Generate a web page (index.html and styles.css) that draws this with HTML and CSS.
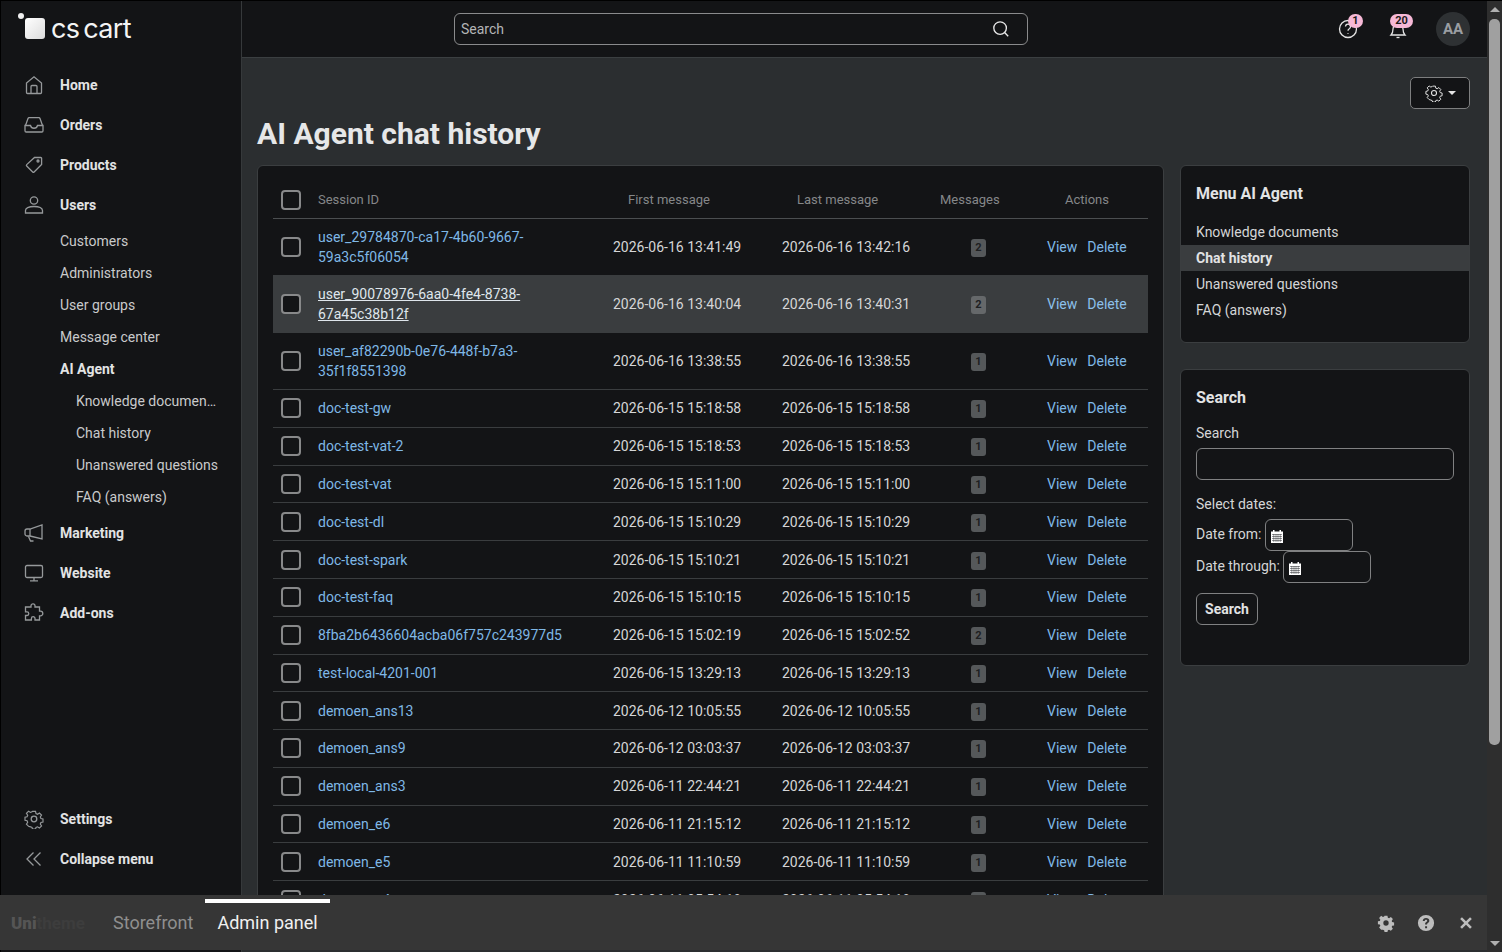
FILE: index.html
```html
<!DOCTYPE html>
<html lang="en">
<head>
  <meta charset="UTF-8">
  <title>AI Agent chat history</title>
  <link rel="stylesheet" href="styles.css">
</head>
<body>

<div class="app">

  <aside class="sidebar">
    <div class="logo">
      <span class="logo-mark"><i class="logo-dot"></i><i class="logo-box"></i></span>
      <span class="logo-text">cs cart</span>
    </div>

    <nav class="nav">
      <a class="nav-item"><svg class="nav-icon" viewBox="0 0 20 20"><path d="M2.500 17.500V8L10 1.800 17.500 8v9.500a1 1 0 0 1-1 1h-13a1 1 0 0 1-1-1z"/><path d="M7 18.500v-7a1 1 0 0 1 1-1h4a1 1 0 0 1 1 1v7"/></svg>Home</a>
      <a class="nav-item"><svg class="nav-icon" viewBox="0 0 20 20"><path d="M1.500 10.500 4 3.500a1.200 1.200 0 0 1 1.100-.8h9.800a1.200 1.200 0 0 1 1.100.8l2.500 7"/><path d="M1 10.500h5.500a3.600 3.600 0 0 0 7 0H19v5.300a1.200 1.200 0 0 1-1.200 1.200H2.200A1.200 1.200 0 0 1 1 15.800z"/></svg>Orders</a>
      <a class="nav-item"><svg class="nav-icon" viewBox="0 0 20 20"><path d="M10.500 2.500h6.300a.8.8 0 0 1 .8.8v6.200l-7.500 7.500a1 1 0 0 1-1.400 0l-6-6a1 1 0 0 1 0-1.400z"/><circle cx="14" cy="6" r="1"/></svg>Products</a>
      <a class="nav-item"><svg class="nav-icon" viewBox="0 0 20 20"><circle cx="10" cy="5.500" r="3.700"/><path d="M1.500 18v-2.500c0-2.200 3-4 8.500-4s8.500 1.800 8.500 4V18z"/></svg>Users</a>
      <a class="nav-sub">Customers</a>
      <a class="nav-sub">Administrators</a>
      <a class="nav-sub">User groups</a>
      <a class="nav-sub">Message center</a>
      <a class="nav-sub nav-sub-active">AI Agent</a>
      <a class="nav-sub nav-sub2">Knowledge documen…</a>
      <a class="nav-sub nav-sub2">Chat history</a>
      <a class="nav-sub nav-sub2">Unanswered questions</a>
      <a class="nav-sub nav-sub2">FAQ (answers)</a>
      <a class="nav-item"><svg class="nav-icon" viewBox="0 0 20 20"><path d="M18 2v14L6 13H3a2 2 0 0 1-2-2V8a2 2 0 0 1 2-2h3z"/><path d="M6 6v7M4.500 13.500 6.500 18h3"/></svg>Marketing</a>
      <a class="nav-item"><svg class="nav-icon" viewBox="0 0 20 20"><rect x="1.500" y="2.500" width="17" height="12" rx="1.500"/><path d="M10 14.500v3M6 17.800h8"/></svg>Website</a>
      <a class="nav-item"><svg class="nav-icon" viewBox="0 0 20 20"><path d="M7 4V2.800a2 2 0 0 1 4 0V4h4.500v4.200h1a2.300 2.300 0 0 1 0 4.600h-1V17H11v-1.500a1.800 1.800 0 0 0-3.600 0V17H1.500v-4.500H3a1.800 1.800 0 0 0 0-3.600H1.500V4z"/></svg>Add-ons</a>
    </nav>

    <nav class="nav nav-bottom">
      <a class="nav-item"><svg class="nav-icon" viewBox="0 0 20 20"><circle cx="10" cy="10" r="2.800"/><path d="M8.300 1.500h3.400l.5 2.500 1.700.7 2.100-1.400 2.400 2.400-1.400 2.100.7 1.700 2.300.5v3.400l-2.300.5-.7 1.700 1.400 2.100-2.400 2.400-2.100-1.400-1.700.7-.5 1.800H8.300l-.5-1.800-1.700-.7L4 18.100l-2.400-2.400L3 13.600l-.7-1.700-2.300-.5V8l2.300-.5.7-1.700L1.600 3.700 4 1.300l2.100 1.400 1.700-.7z" transform="translate(1 1) scale(.9)"/></svg>Settings</a>
      <a class="nav-item"><svg class="nav-icon" viewBox="0 0 20 20"><path d="M9.500 3.500 3 10l6.500 6.500M16.500 3.500 10 10l6.500 6.500"/></svg>Collapse menu</a>
    </nav>
  </aside>

  <div class="main">
    <header class="topbar">
      <div class="top-search">
        <span class="top-search-text">Search</span>
        <svg class="top-search-icon" viewBox="0 0 20 20"><circle cx="9" cy="9" r="7"/><path d="m14 14 4 4"/></svg>
      </div>
      <div class="top-icons">
        <span class="top-icon">
          <svg viewBox="0 0 20 20"><circle cx="10" cy="10" r="8.500"/><path d="M7.500 7.500a2.500 2.500 0 1 1 3.800 2.200c-.9.500-1.300 1-1.300 2"/><path d="M10 14v.8"/></svg>
          <b class="pill pill-one">1</b>
        </span>
        <span class="top-icon">
          <svg viewBox="0 0 20 20"><path d="M3 16c1.500-1.500 2-3 2-6a5 5 0 0 1 10 0c0 3 .5 4.500 2 6z"/><path d="M8.500 18.500h3"/></svg>
          <b class="pill pill-two">20</b>
        </span>
        <span class="avatar">AA</span>
      </div>
    </header>

    <div class="content">
      <div class="toolbar">
        <button class="gear-btn">
          <svg viewBox="0 0 20 20"><circle cx="10" cy="10" r="2.800"/><path d="M8.300 1.500h3.400l.5 2.500 1.700.7 2.100-1.400 2.400 2.400-1.400 2.100.7 1.700 2.300.5v3.400l-2.300.5-.7 1.700 1.400 2.100-2.400 2.400-2.100-1.400-1.700.7-.5 1.800H8.300l-.5-1.800-1.700-.7L4 18.100l-2.400-2.400L3 13.600l-.7-1.700-2.300-.5V8l2.300-.5.7-1.700L1.600 3.700 4 1.300l2.100 1.400 1.700-.7z" transform="translate(1 1) scale(.9)"/></svg>
          <i class="caret"></i>
        </button>
      </div>

      <h1 class="page-title">AI Agent chat history</h1>

      <div class="columns">
        <section class="card table-card">
          <table class="history">
            <colgroup>
              <col class="col-check"><col class="col-id"><col class="col-first"><col class="col-last"><col class="col-count"><col class="col-actions">
            </colgroup>
            <thead>
              <tr>
                <th><i class="check"></i></th>
                <th>Session ID</th>
                <th class="th-first">First message</th>
                <th class="th-last">Last message</th>
                <th class="th-count">Messages</th>
                <th class="th-actions">Actions</th>
              </tr>
            </thead>
            <tbody>
              <tr class="tall"><td><i class="check"></i></td><td><a class="link">user_29784870-ca17-4b60-9667-59a3c5f06054</a></td><td>2026-06-16 13:41:49</td><td>2026-06-16 13:42:16</td><td class="td-count"><span class="count">2</span></td><td><a class="link">View</a><a class="link act">Delete</a></td></tr>
              <tr class="tall hover"><td><i class="check"></i></td><td><a class="link">user_90078976-6aa0-4fe4-8738-67a45c38b12f</a></td><td>2026-06-16 13:40:04</td><td>2026-06-16 13:40:31</td><td class="td-count"><span class="count">2</span></td><td><a class="link">View</a><a class="link act">Delete</a></td></tr>
              <tr class="tall"><td><i class="check"></i></td><td><a class="link">user_af82290b-0e76-448f-b7a3-35f1f8551398</a></td><td>2026-06-16 13:38:55</td><td>2026-06-16 13:38:55</td><td class="td-count"><span class="count">1</span></td><td><a class="link">View</a><a class="link act">Delete</a></td></tr>
              <tr><td><i class="check"></i></td><td><a class="link">doc-test-gw</a></td><td>2026-06-15 15:18:58</td><td>2026-06-15 15:18:58</td><td class="td-count"><span class="count">1</span></td><td><a class="link">View</a><a class="link act">Delete</a></td></tr>
              <tr><td><i class="check"></i></td><td><a class="link">doc-test-vat-2</a></td><td>2026-06-15 15:18:53</td><td>2026-06-15 15:18:53</td><td class="td-count"><span class="count">1</span></td><td><a class="link">View</a><a class="link act">Delete</a></td></tr>
              <tr><td><i class="check"></i></td><td><a class="link">doc-test-vat</a></td><td>2026-06-15 15:11:00</td><td>2026-06-15 15:11:00</td><td class="td-count"><span class="count">1</span></td><td><a class="link">View</a><a class="link act">Delete</a></td></tr>
              <tr><td><i class="check"></i></td><td><a class="link">doc-test-dl</a></td><td>2026-06-15 15:10:29</td><td>2026-06-15 15:10:29</td><td class="td-count"><span class="count">1</span></td><td><a class="link">View</a><a class="link act">Delete</a></td></tr>
              <tr><td><i class="check"></i></td><td><a class="link">doc-test-spark</a></td><td>2026-06-15 15:10:21</td><td>2026-06-15 15:10:21</td><td class="td-count"><span class="count">1</span></td><td><a class="link">View</a><a class="link act">Delete</a></td></tr>
              <tr><td><i class="check"></i></td><td><a class="link">doc-test-faq</a></td><td>2026-06-15 15:10:15</td><td>2026-06-15 15:10:15</td><td class="td-count"><span class="count">1</span></td><td><a class="link">View</a><a class="link act">Delete</a></td></tr>
              <tr><td><i class="check"></i></td><td><a class="link">8fba2b6436604acba06f757c243977d5</a></td><td>2026-06-15 15:02:19</td><td>2026-06-15 15:02:52</td><td class="td-count"><span class="count">2</span></td><td><a class="link">View</a><a class="link act">Delete</a></td></tr>
              <tr><td><i class="check"></i></td><td><a class="link">test-local-4201-001</a></td><td>2026-06-15 13:29:13</td><td>2026-06-15 13:29:13</td><td class="td-count"><span class="count">1</span></td><td><a class="link">View</a><a class="link act">Delete</a></td></tr>
              <tr><td><i class="check"></i></td><td><a class="link">demoen_ans13</a></td><td>2026-06-12 10:05:55</td><td>2026-06-12 10:05:55</td><td class="td-count"><span class="count">1</span></td><td><a class="link">View</a><a class="link act">Delete</a></td></tr>
              <tr><td><i class="check"></i></td><td><a class="link">demoen_ans9</a></td><td>2026-06-12 03:03:37</td><td>2026-06-12 03:03:37</td><td class="td-count"><span class="count">1</span></td><td><a class="link">View</a><a class="link act">Delete</a></td></tr>
              <tr><td><i class="check"></i></td><td><a class="link">demoen_ans3</a></td><td>2026-06-11 22:44:21</td><td>2026-06-11 22:44:21</td><td class="td-count"><span class="count">1</span></td><td><a class="link">View</a><a class="link act">Delete</a></td></tr>
              <tr><td><i class="check"></i></td><td><a class="link">demoen_e6</a></td><td>2026-06-11 21:15:12</td><td>2026-06-11 21:15:12</td><td class="td-count"><span class="count">1</span></td><td><a class="link">View</a><a class="link act">Delete</a></td></tr>
              <tr><td><i class="check"></i></td><td><a class="link">demoen_e5</a></td><td>2026-06-11 11:10:59</td><td>2026-06-11 11:10:59</td><td class="td-count"><span class="count">1</span></td><td><a class="link">View</a><a class="link act">Delete</a></td></tr>
              <tr><td><i class="check"></i></td><td><a class="link">demoen_e4</a></td><td>2026-06-11 05:54:18</td><td>2026-06-11 05:54:18</td><td class="td-count"><span class="count">1</span></td><td><a class="link">View</a><a class="link act">Delete</a></td></tr>
            </tbody>
          </table>
        </section>

        <div class="side">
          <section class="card side-menu">
            <h4 class="card-title">Menu AI Agent</h4>
            <ul class="menu-list">
              <li>Knowledge documents</li>
              <li class="menu-active">Chat history</li>
              <li>Unanswered questions</li>
              <li>FAQ (answers)</li>
            </ul>
          </section>

          <section class="card side-search">
            <h4 class="card-title">Search</h4>
            <div class="field-label">Search</div>
            <div class="input input-wide"></div>
            <div class="field-label dates-label">Select dates:</div>
            <div class="date-row">Date from:
              <span class="input input-date"><svg class="cal" viewBox="0 0 12 13"><path d="M2 0h1.500v1.500h5V0H10v1.500h2V13H0V1.500h2z" fill="#fff"/><path d="M1 4.500h10M1 6.500h10M1 8.500h10M1 10.500h10M2.800 4v8M5 4v8M7 4v8M9.200 4v8" stroke="#15171a" stroke-width=".45"/></svg></span>
            </div>
            <div class="date-row">Date through:
              <span class="input input-date"><svg class="cal" viewBox="0 0 12 13"><path d="M2 0h1.500v1.500h5V0H10v1.500h2V13H0V1.500h2z" fill="#fff"/><path d="M1 4.500h10M1 6.500h10M1 8.500h10M1 10.500h10M2.800 4v8M5 4v8M7 4v8M9.200 4v8" stroke="#15171a" stroke-width=".45"/></svg></span>
            </div>
            <button class="search-btn">Search</button>
          </section>
        </div>
      </div>
    </div>
  </div>

  <div class="scrollbar">
    <i class="arrow-up"></i>
    <div class="track"><div class="thumb"></div></div>
    <i class="arrow-down"></i>
  </div>
</div>

<div class="bottom-bar">
  <span class="brand"><b>Uni</b>theme</span>
  <a class="bar-tab">Storefront</a>
  <a class="bar-tab bar-tab-active">Admin panel</a>
  <div class="bar-icons">
    <svg viewBox="0 0 20 20"><path fill-rule="evenodd" d="M8.200 1h3.600l.5 2.600 1.500.6 2.200-1.500 2.500 2.500-1.500 2.200.6 1.500 2.400.5v3.600l-2.400.5-.6 1.500 1.500 2.200-2.500 2.500-2.200-1.500-1.500.6-.5 2.200H8.200l-.5-2.200-1.500-.6L4 18.200l-2.500-2.500L3 13.500l-.6-1.500-2.400-.5V7.900l2.400-.5.6-1.500L1.500 3.700 4 1.200l2.200 1.500 1.500-.6zM10 6.700a3.300 3.300 0 1 0 0 6.600 3.300 3.300 0 0 0 0-6.600z" transform="translate(1 1) scale(.9)"/></svg>
    <svg viewBox="0 0 20 20"><path fill-rule="evenodd" d="M10 1a9 9 0 1 1 0 18 9 9 0 0 1 0-18zM9 13.500v2.300h2.200v-2.300zM10 4.500c-2 0-3.500 1.100-3.600 3.200h2.200c.1-.8.600-1.300 1.400-1.300s1.300.5 1.300 1.100c0 .7-.5 1-1.100 1.500-.9.600-1.200 1.200-1.200 2.700h2.200c0-.9.200-1.200 1-1.700.9-.7 1.500-1.400 1.500-2.600 0-1.800-1.500-2.900-3.700-2.900z"/></svg>
    <svg viewBox="0 0 20 20"><path d="M5.500 3.500 10 8l4.500-4.500 2 2L12 10l4.500 4.500-2 2L10 12l-4.500 4.500-2-2L8 10 3.500 5.500z"/></svg>
  </div>
</div>

</body>
</html>
```

FILE: styles.css
```css
* {
  box-sizing: border-box;
}
html, body {
  height: 100%;
}
body {
  margin: 0;
  background: #000;
  font-family: Roboto, "Liberation Sans", sans-serif;
  font-size: 14px;
  line-height: 20px;
  color: #d5d6d7;
  overflow: hidden;
}
.app {
  display: flex;
  height: 100%;
  padding: 1px 0 0 1px;
}

/* sidebar */
.sidebar {
  width: 241px;
  flex: none;
  display: flex;
  flex-direction: column;
  background: #131416;
  border-right: 1px solid #36393b;
  padding-bottom: 73px;
}
.logo {
  height: 56px;
  display: flex;
  align-items: flex-start;
  padding: 12px 0 0 17px;
}
.logo-mark {
  display: flex;
  width: 33px;
}
.logo-dot {
  width: 6px;
  height: 6px;
  border-radius: 50%;
  background: #f0f0f0;
}
.logo-box {
  width: 20px;
  height: 21px;
  margin: 5px 0 0 1px;
  border-radius: 3px;
  background: linear-gradient(135deg, #fff, #dcdcdc);
}
.logo-text {
  margin-top: 1px;
  font-family: Inter, sans-serif;
  font-size: 27px;
  line-height: 30px;
  letter-spacing: -.65px;
  word-spacing: -3px;
  color: #f4f4f4;
}
.nav {
  display: flex;
  flex-direction: column;
  padding-top: 8px;
}
.nav-bottom {
  margin-top: auto;
  padding-top: 0;
}
.nav-item {
  display: flex;
  align-items: center;
  height: 40px;
  padding-left: 23px;
  font-weight: 700;
  color: #e2e3e4;
}
.nav-icon {
  width: 20px;
  height: 20px;
  margin-right: 16px;
  fill: none;
  stroke: #96999b;
  stroke-width: 1.300;
}
.nav-sub {
  display: block;
  height: 32px;
  line-height: 32px;
  padding-left: 59px;
  color: #c9cacb;
}
.nav-sub-active {
  font-weight: 700;
  color: #e2e3e4;
}
.nav-sub2 {
  padding-left: 75px;
}

/* top bar */
.main {
  flex: 1;
  min-width: 0;
  display: flex;
  flex-direction: column;
  background: #2b2e30;
}
.topbar {
  height: 57px;
  flex: none;
  display: flex;
  align-items: center;
  background: #131416;
  border-bottom: 1px solid #3b3f41;
  padding: 0 17px 0 212px;
}
.top-search {
  width: 574px;
  height: 32px;
  display: flex;
  align-items: center;
  justify-content: space-between;
  border: 1px solid #8a8b8c;
  border-radius: 6px;
  padding: 0 17px 0 6px;
  color: #b4b5b6;
}
.top-search-icon {
  width: 18px;
  height: 18px;
  fill: none;
  stroke: #e8e8e8;
  stroke-width: 1.500;
}
.top-icons {
  display: flex;
  align-items: center;
  margin-left: auto;
}
.top-icon {
  position: relative;
  display: block;
  width: 20px;
  height: 20px;
  margin-right: 30px;
}
.top-icon svg {
  display: block;
  fill: none;
  stroke: #e4e4e4;
  stroke-width: 1.300;
}
.pill {
  position: absolute;
  top: -5px;
  height: 14px;
  border-radius: 7px;
  background: #f6b8d6;
  color: #1a1a1a;
  font-size: 11px;
  line-height: 14px;
  text-align: center;
}
.pill-one {
  left: 10px;
  width: 15px;
}
.pill-two {
  left: 2px;
  width: 23px;
}
.avatar {
  width: 34px;
  height: 34px;
  margin-left: -2px;
  border-radius: 50%;
  background: #2e3133;
  color: #9a9ea2;
  font-size: 15px;
  font-weight: 700;
  line-height: 34px;
  text-align: center;
}

/* content */
.content {
  flex: 1;
  min-height: 0;
  overflow: hidden;
  padding: 19px 17px 0 15px;
}
.toolbar {
  display: flex;
  justify-content: flex-end;
}
.gear-btn {
  width: 60px;
  height: 32px;
  display: flex;
  align-items: center;
  justify-content: center;
  gap: 5px;
  background: #131416;
  border: 1px solid #7d7e7f;
  border-radius: 5px;
}
.gear-btn svg {
  width: 18px;
  height: 18px;
  fill: none;
  stroke: #e4e4e4;
  stroke-width: 1.200;
}
.caret {
  width: 0;
  height: 0;
  border: 4px solid transparent;
  border-top-color: #e4e4e4;
  border-bottom: 0;
}
.page-title {
  margin: 7px 0 13px;
  font-size: 30px;
  font-weight: 700;
  line-height: 36px;
  color: #e6e7e8;
}
.columns {
  display: flex;
  align-items: flex-start;
  gap: 16px;
}
.card {
  background: #131416;
  border: 1px solid #3b3e40;
  border-radius: 6px;
}

/* table */
.table-card {
  width: 907px;
  flex: none;
  padding: 15px 15px 0;
}
.history {
  width: 875px;
  table-layout: fixed;
  border-collapse: collapse;
}
.col-check { width: 37px; }
.col-id { width: 295px; }
.col-first { width: 169px; }
.col-last { width: 158px; }
.col-count { width: 107px; }
.col-actions { width: 109px; }
.history th {
  height: 37px;
  padding: 1px 8px 0;
  font-size: 13px;
  font-weight: 400;
  text-align: left;
  color: #858789;
  border-bottom: 1px solid #4b4e50;
}
.history .th-first { padding-left: 23px; }
.history .th-last { padding-left: 23px; }
.history .th-count { padding-left: 8px; }
.history .th-actions { padding-left: 26px; }
.history td {
  height: 37.800px;
  padding: 0 8px;
  color: #d5d6d7;
  border-bottom: 1px solid #3a3d3f;
}
.history .tall td {
  height: 57.150px;
}
.hover td {
  background: #3a3d3f;
}
.hover .link {
  color: #dfe6ec;
  text-decoration: underline;
}
.hover .act, .hover td:last-child .link {
  color: #8cc0ea;
  text-decoration: none;
}
.check {
  display: block;
  width: 20px;
  height: 20px;
  border: 2px solid #88898a;
  border-radius: 4px;
  background: #131416;
}
.link {
  color: #7fb8e6;
}
.act {
  margin-left: 10px;
}
.td-count {
  padding-left: 39px !important;
}
.count {
  display: block;
  width: 15px;
  height: 18px;
  margin-top: 2px;
  border-radius: 3px;
  background: #55585a;
  color: #1e2022;
  font-size: 11px;
  font-weight: 700;
  line-height: 18px;
  text-align: center;
}
.hover .count {
  background: #65686a;
}

/* side column */
.side {
  width: 290px;
  flex: none;
  display: flex;
  flex-direction: column;
  gap: 26px;
}
.card-title {
  margin: 0;
  padding: 0 15px;
  font-size: 16px;
  font-weight: 700;
  line-height: 24px;
  color: #e2e3e4;
}
.side-menu {
  height: 178px;
  padding-top: 16px;
}
.menu-list {
  list-style: none;
  margin: 13px 0 0;
  padding: 0;
}
.menu-list li {
  height: 26px;
  line-height: 26px;
  padding: 0 15px;
}
.menu-active {
  background: #3a3d3f;
  font-weight: 700;
  color: #e2e3e4;
}
.side-search {
  height: 297px;
  padding: 16px 15px 0;
}
.side-search .card-title {
  padding: 0;
}
.field-label {
  margin-top: 13px;
}
.dates-label {
  margin-top: 14px;
}
.input {
  display: block;
  height: 32px;
  border: 1px solid #808182;
  border-radius: 6px;
}
.input-wide {
  width: 258px;
  margin-top: 5px;
}
.date-row {
  display: flex;
  align-items: flex-start;
  height: 32px;
  line-height: 30px;
  white-space: nowrap;
}
.input-date {
  width: 88px;
  margin-left: 3.500px;
  padding: 10px 0 0 5px;
}
.cal {
  display: block;
  width: 12px;
  height: 13px;
}
.dates-label + .date-row {
  margin-top: 5px;
}
.search-btn {
  display: block;
  width: 62px;
  height: 32px;
  margin-top: 10px;
  background: #131416;
  border: 1px solid #808182;
  border-radius: 6px;
  font-family: inherit;
  font-size: 14px;
  font-weight: 700;
  color: #e2e3e4;
}

/* fake scrollbar */
.scrollbar {
  width: 15px;
  flex: none;
  display: flex;
  flex-direction: column;
  align-items: center;
  background: #2e2e2e;
  padding: 6px 0;
}
.arrow-up, .arrow-down {
  width: 0;
  height: 0;
  border-left: 5px solid transparent;
  border-right: 5px solid transparent;
}
.arrow-up {
  border-bottom: 5px solid #b0b0b0;
}
.arrow-down {
  border-top: 5px solid #b0b0b0;
}
.track {
  flex: 1;
  width: 100%;
  padding: 7px 2px 0;
}
.thumb {
  height: 726px;
  border-radius: 5px;
  background: #a0a0a0;
}

/* bottom bar */
.bottom-bar {
  position: fixed;
  left: 0;
  right: 15px;
  bottom: 2px;
  height: 55px;
  display: flex;
  align-items: center;
  background: #363636;
}
.brand {
  width: 113px;
  padding-left: 11px;
  font-size: 17px;
  font-weight: 700;
  color: #3d3d3d;
}
.brand b {
  color: #555;
}
.bar-tab {
  font-size: 18px;
  color: #8f8f8f;
}
.bar-tab-active {
  position: relative;
  margin-left: 24px;
  color: #f0f0f0;
}
.bar-tab-active::before {
  content: "";
  position: absolute;
  left: -12px;
  top: -14px;
  width: 125px;
  height: 4px;
  background: #fff;
}
.bar-icons {
  display: flex;
  gap: 22px;
  margin-left: auto;
  padding-right: 12px;
}
.bar-icons svg {
  width: 18px;
  height: 18px;
  fill: #bdbdbd;
}
```
